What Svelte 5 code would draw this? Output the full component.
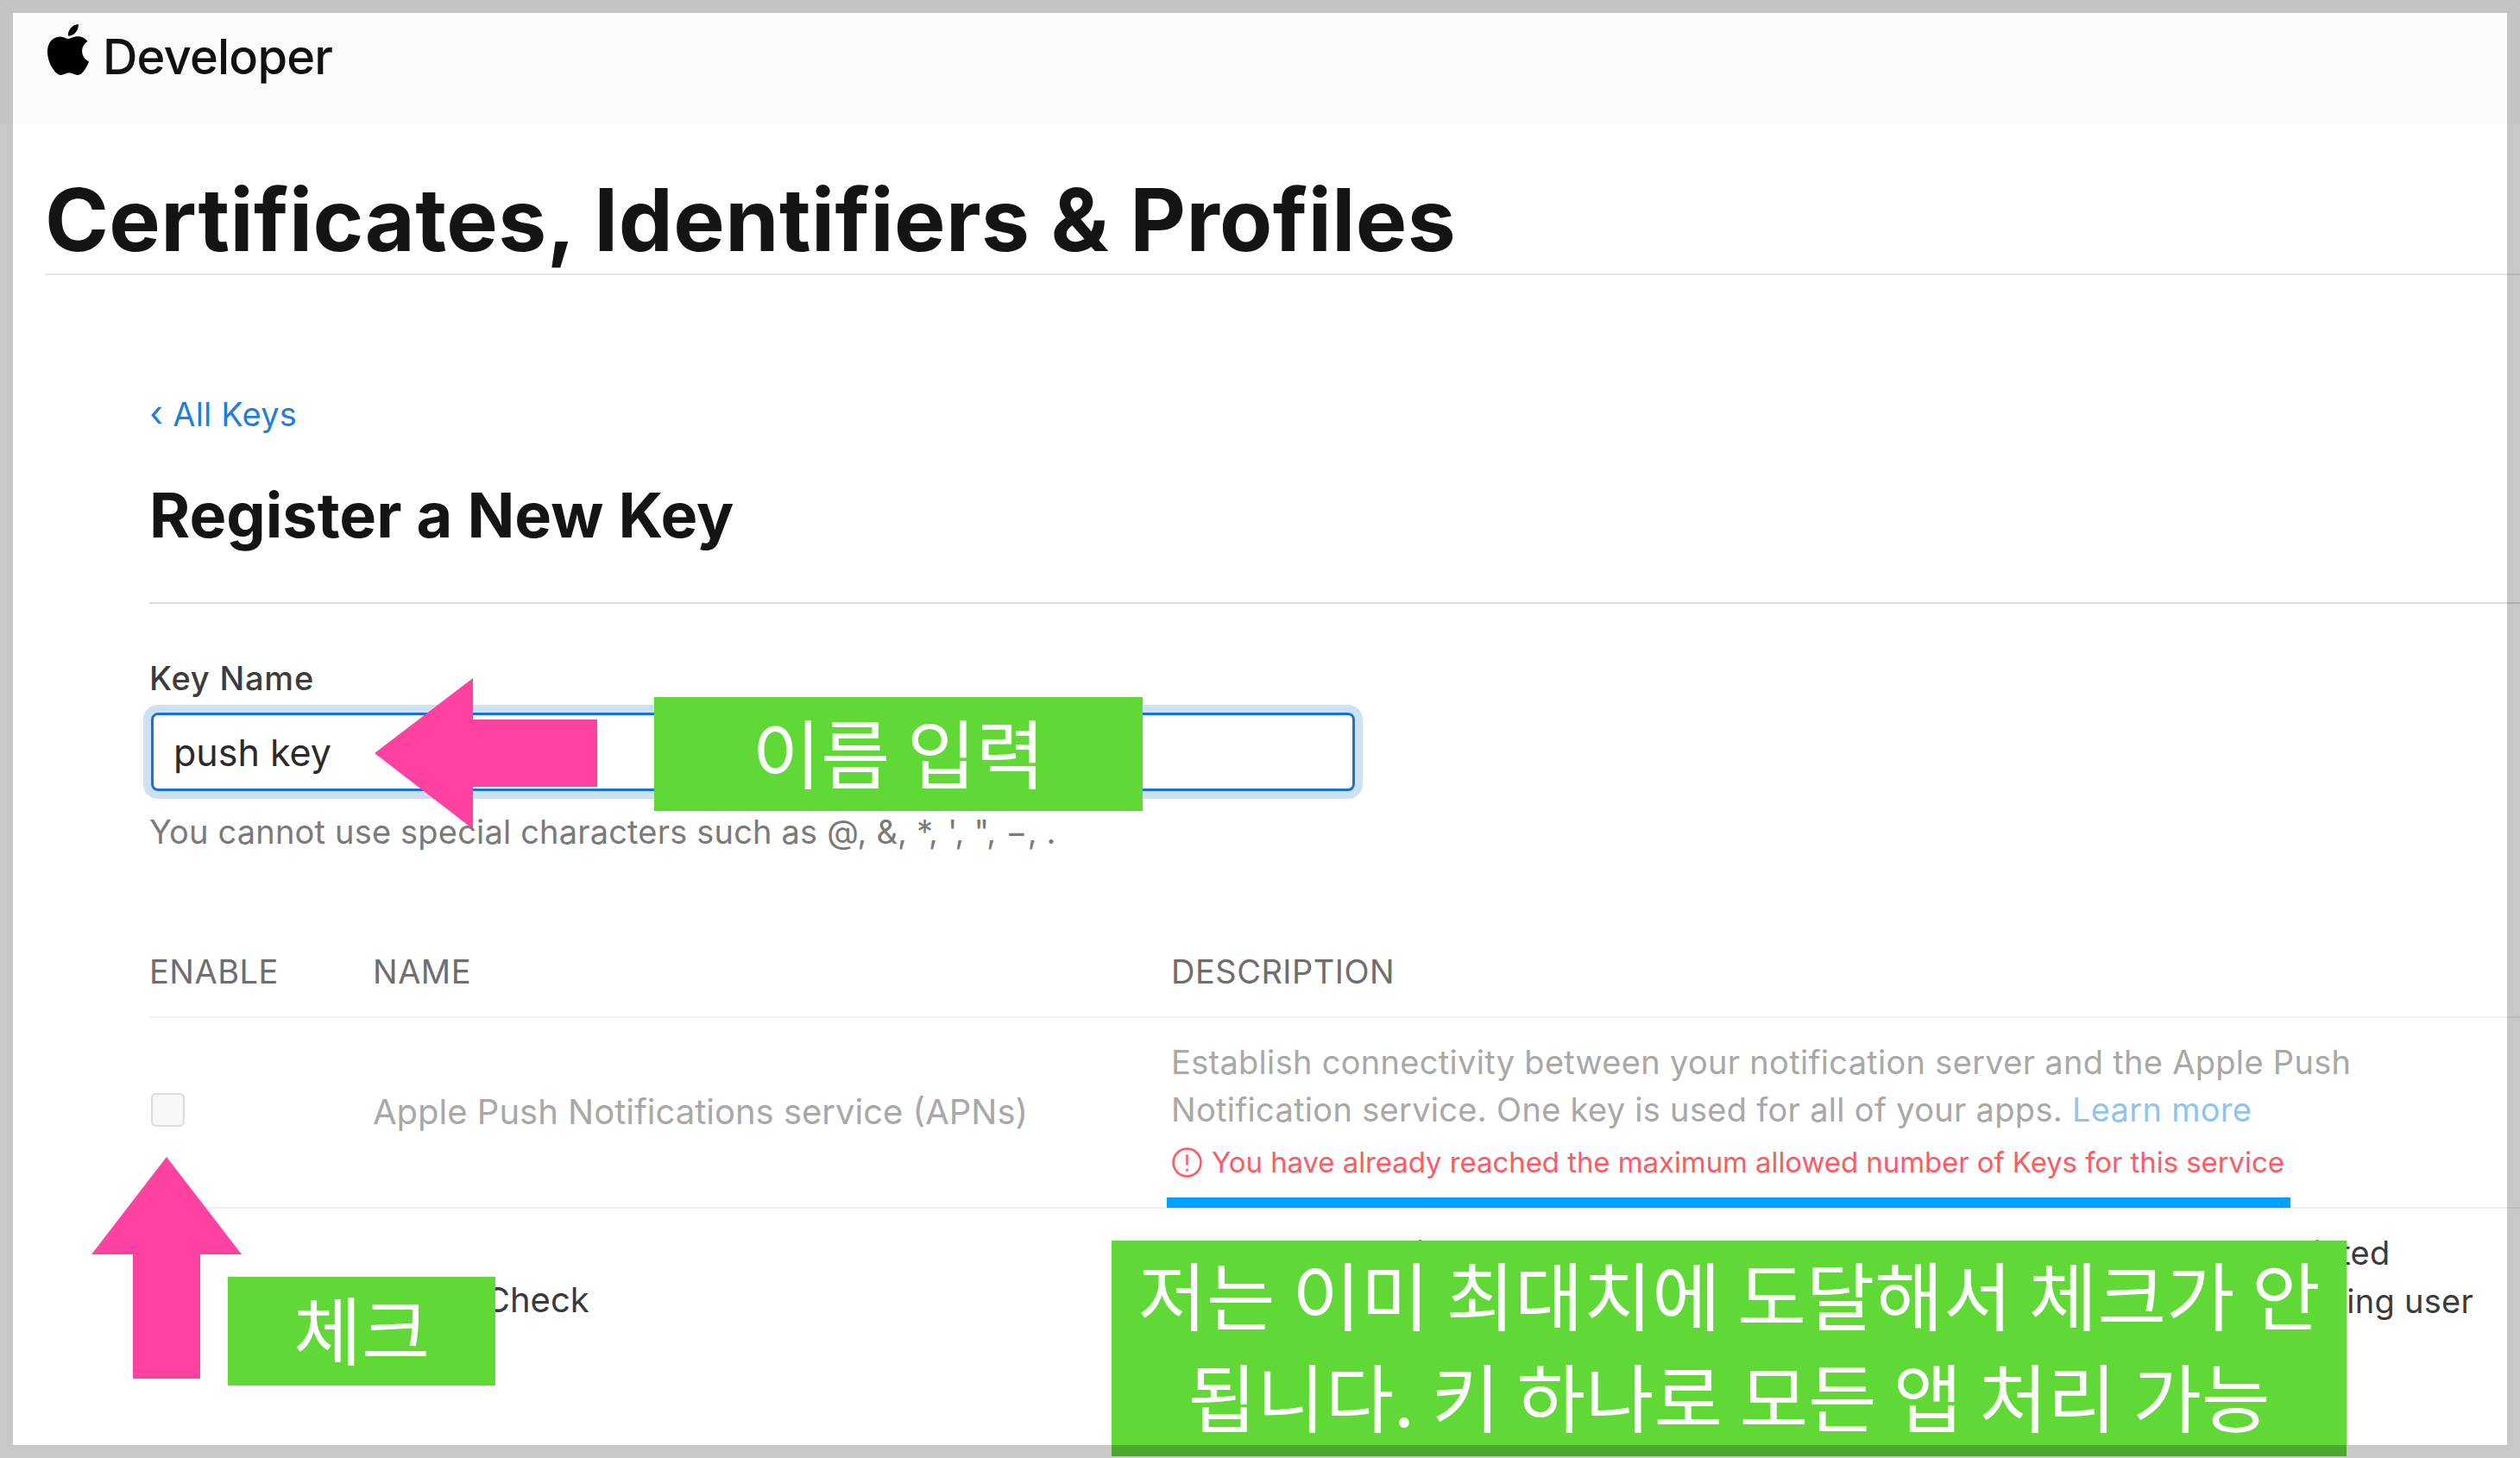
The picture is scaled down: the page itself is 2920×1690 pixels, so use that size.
<script>
  const columns = ['ENABLE', 'NAME', 'DESCRIPTION'];
</script>

<div class="frame">
  <main class="sheet">
    <header class="topbar">
      <svg class="apple" viewBox="2.3 0 19.4 24" aria-hidden="true"><path d="M12.152 6.896c-.948 0-2.415-1.078-3.96-1.04-2.04.027-3.91 1.183-4.961 3.014-2.117 3.675-.546 9.103 1.519 12.09 1.013 1.454 2.208 3.09 3.792 3.039 1.52-.065 2.09-.987 3.935-.987 1.831 0 2.35.987 3.96.948 1.637-.026 2.676-1.48 3.676-2.948 1.156-1.688 1.636-3.325 1.662-3.415-.039-.013-3.182-1.221-3.22-4.857-.026-3.04 2.48-4.494 2.597-4.559-1.429-2.09-3.623-2.324-4.39-2.376-2-.156-3.675 1.09-4.61 1.09zM15.53 3.83c.843-1.012 1.4-2.427 1.245-3.83-1.207.052-2.662.805-3.532 1.818-.78.896-1.454 2.338-1.273 3.714 1.338.104 2.715-.688 3.559-1.701"/></svg>
      <span class="brand">Developer</span>
    </header>

    <h1 class="title">Certificates, Identifiers &amp; Profiles</h1>

    <section class="content">
      <a class="back" href="#keys"><span class="chev">‹</span> All Keys</a>
      <h2 class="heading">Register a New Key</h2>

      <label class="field-label" for="key">Key Name</label>
      <div class="input" id="key">push key</div>
      <p class="hint">You cannot use special characters such as @, &amp;, *, ', ", −, .</p>

      <div class="grid head">
        {#each columns as c}<div>{c}</div>{/each}
      </div>

      <div class="grid row disabled">
        <div class="cell-check"><span class="checkbox"></span></div>
        <div class="cell-name">Apple Push Notifications service (APNs)</div>
        <div class="desc">
          <div>Establish connectivity between your notification server and the Apple Push</div>
          <div>Notification service. One key is used for all of your apps. <a href="#more">Learn more</a></div>
          <div class="error">
            <svg class="alert" viewBox="0 0 36 36" aria-hidden="true"><circle cx="18" cy="18" r="15.5"/><path d="M18 9v12M18 25v3"/></svg>
            <span>You have already reached the maximum allowed number of Keys for this service</span>
          </div>
        </div>
      </div>

      <div class="grid row second">
        <div></div>
        <div class="cell-name2">DeviceCheck</div>
        <div class="desc2">
          <div>Access the DeviceCheck and App Attest APIs to get data that your associated</div>
          <div class="desc2-end">apps can use to reduce fraud in your apps while preserving user</div>
        </div>
      </div>
    </section>
  </main>

  <svg class="arrow arrow-left" viewBox="0 0 258 175" aria-hidden="true"><polygon points="0,87 114,0 114,48 258,48 258,126 114,126 114,175"/></svg>
  <svg class="arrow arrow-up" viewBox="0 0 174 257" aria-hidden="true"><polygon points="87,0 174,113 126,113 126,257 48,257 48,113 0,113"/></svg>
  <div class="note note-name">이름 입력</div>
  <div class="note note-check">체크</div>
  <div class="note note-limit">저는 이미 최대치에 도달해서 체크가 안<br />됩니다. 키 하나로 모든 앱 처리 가능</div>
  <div class="rule-blue"></div>
</div>

<style>
  :global(body) { margin: 0; }
  .frame {
    position: relative;
    width: 2920px;
    height: 1690px;
    background: #fff;
    overflow: hidden;
    font-family: Inter, "Noto Sans", sans-serif;
    color: #111;
  }
  .frame::after {
    content: "";
    position: absolute;
    inset: 0;
    border: 15px solid rgba(0, 0, 0, 0.216);
    pointer-events: none;
  }
  .sheet {
    height: 1690px;
    overflow: hidden;
  }
  .topbar {
    height: 144px;
    background: #fafafa;
    display: flex;
    align-items: flex-start;
    padding: 28px 0 0 55px;
    box-sizing: border-box;
  }
  .apple { width: 48px; height: 59px; fill: #000; flex: none; }
  .brand {
    margin: 10px 0 0 16px;
    font-size: 56px;
    line-height: 56px;
    font-weight: 500;
    letter-spacing: -0.8px;
    color: #111;
  }
  .title {
    margin: 61px 0 0 52px;
    padding-bottom: 12px;
    border-bottom: 2px solid #e8e8e8;
    font-size: 100px;
    line-height: 100px;
    font-weight: 700;
    letter-spacing: 0.4px;
    color: #141414;
    white-space: nowrap;
  }
  .content { padding-left: 173px; }
  .back {
    display: block;
    margin-top: 141px;
    font-size: 38px;
    line-height: 38px;
    letter-spacing: 0.2px;
    color: #1f7fd8;
    text-decoration: none;
  }
  .chev { font-size: 42px; }
  .heading {
    margin: 62px 0 0;
    padding-bottom: 65px;
    border-bottom: 2px solid #dedede;
    font-size: 72px;
    line-height: 72px;
    font-weight: 700;
    color: #141414;
  }
  .field-label {
    display: block;
    margin-top: 67px;
    font-size: 38px;
    line-height: 38px;
    font-weight: 500;
    letter-spacing: 0.8px;
    color: #3c3c3c;
  }
  .input {
    margin: 21px 0 0 2px;
    width: 1395px;
    height: 91px;
    box-sizing: border-box;
    padding-left: 23px;
    display: flex;
    align-items: center;
    border: 3px solid #1a73d0;
    border-radius: 8px;
    box-shadow: 0 0 0 9px #cce1f4;
    font-size: 43px;
    line-height: 46px;
    color: #2a2a2a;
  }
  .hint {
    margin: 28px 0 0;
    font-size: 38px;
    line-height: 38px;
    letter-spacing: 0.18px;
    color: #7a7a7a;
  }
  .grid {
    display: grid;
    grid-template-columns: 259px 925px 1fr;
  }
  .head {
    margin-top: 124px;
    padding-bottom: 33px;
    border-bottom: 2px solid #f0f0f0;
    font-size: 38px;
    line-height: 38px;
    letter-spacing: 0.5px;
    color: #6e6e6e;
  }
  .row {
    font-size: 38px;
    color: #a8a8a8;
  }
  .disabled {
    height: 221px;
    box-sizing: border-box;
    border-bottom: 2px solid #f0f0f0;
  }
  .cell-check { padding: 87px 0 0 2px; }
  .checkbox {
    display: block;
    width: 39px;
    height: 39px;
    box-sizing: border-box;
    background: #f8f8f8;
    border: 2px solid #dcdcdc;
    border-radius: 6px;
  }
  .cell-name { padding-top: 86px; line-height: 46px; font-size: 40px; }
  .desc { padding-top: 24px; line-height: 55px; white-space: nowrap; letter-spacing: 0.3px; }
  .desc a { color: #8fc4ee; text-decoration: none; }
  .error {
    display: flex;
    align-items: center;
    gap: 10px;
    margin-top: 3px;
    font-size: 33px;
    letter-spacing: -0.08px;
    line-height: 60px;
    color: #ff5a64;
  }
  .alert { width: 37px; height: 37px; flex: none; fill: none; stroke: #ff5a64; stroke-width: 2.5; }
  .second { color: #3a3a3a; }
  .cell-name2 { padding-top: 83px; line-height: 46px; font-size: 40px; }
  .desc2 { padding-top: 23px; line-height: 56px; white-space: nowrap; letter-spacing: 0.25px; }
  .desc2-end { width: 1509px; direction: rtl; text-align: right; overflow: hidden; unicode-bidi: plaintext; }

  .arrow { position: absolute; fill: #ff42a1; }
  .arrow-left { left: 434px; top: 786px; width: 258px; height: 175px; }
  .arrow-up { left: 106px; top: 1341px; width: 174px; height: 257px; }
  .note {
    position: absolute;
    box-sizing: border-box;
    background: #60d937;
    color: #fff;
    font-family: "Noto Sans CJK KR", sans-serif;
    text-align: center;
  }
  .note-name { left: 758px; top: 808px; width: 566px; height: 132px; font-size: 87px; line-height: 125px; }
  .note-check { left: 264px; top: 1480px; width: 310px; height: 126px; font-size: 86px; line-height: 118px; }
  .note-limit {
    left: 1288px;
    top: 1438px;
    width: 1431px;
    height: 250px;
    font-size: 86.5px;
    line-height: 118px;
    padding-top: 2px;
    white-space: nowrap;
  }
  .rule-blue { position: absolute; left: 1352px; top: 1388px; width: 1302px; height: 12px; background: #00a2ff; }
</style>
